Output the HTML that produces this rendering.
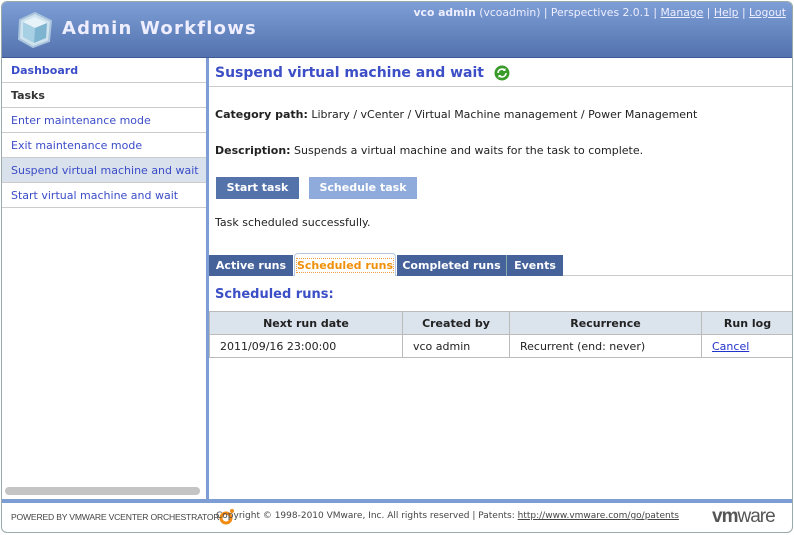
<!DOCTYPE html>
<html><head><style>
*{margin:0;padding:0;box-sizing:border-box}
body{width:794px;height:535px;background:#fff;font-family:"DejaVu Sans",Verdana,sans-serif;font-size:11px;color:#222;position:relative;overflow:hidden}
.abs{position:absolute}
#frame{left:1px;top:1px;width:792px;height:532px;border:1px solid #9aa;border-radius:6px;overflow:hidden;background:#fff}
#hdr{left:0;top:0;width:792px;height:56px;background:linear-gradient(#7d9ed6,#5372ae);border-bottom:1px solid #3e5b93}
#title{left:60px;top:16px;font-size:18px;font-weight:bold;color:#eef;letter-spacing:1.2px}
#top{right:8px;top:4px;color:#eef;font-size:10.8px}
#top u{color:#eef}
.nav{left:0;width:204px;height:25px;border-bottom:1px solid #ccc;padding:6px 0 0 9px;color:#3b4cc8;font-size:11px}
#vbar{left:204px;top:56px;width:3px;height:442px;background:#7e9dd4}
#foot{left:0;top:497px;width:792px;height:4px;background:#7e9dd4}
.tab{top:253px;height:21px;background:#45629b;color:#fff;font-weight:bold;font-size:11px;padding-top:4px;text-align:center}
table{border-collapse:collapse;position:absolute;left:207px;top:309px;width:585px}
td,th{border:1px solid #bbb;height:23px;font-size:11px}
th{background:#dbe3ed;font-weight:bold;text-align:center}
td{padding-left:10px}
.btn{top:175px;height:22px;color:#fff;font-weight:bold;text-align:center;padding-top:4px}
</style></head><body>
<div class="abs" id="frame">
<div class="abs" id="hdr">
<svg class="abs" style="left:14px;top:9px" width="38" height="38" viewBox="0 0 38 38"><polygon points="19,2 35,10 33,30 17,36 3,28 4,9" fill="#cfe3ee" stroke="#a9c4dc" stroke-width="2"/><polygon points="7,11 19,6 31,12 19,17" fill="#e8f3f9"/><polygon points="7,11 19,17 18,32 7,26" fill="#a8d0e4"/><polygon points="19,17 31,12 30,27 18,32" fill="#7fb4d0"/></svg>
<div class="abs" id="title">Admin Workflows</div>
<div class="abs" id="top"><b>vco admin</b> (vcoadmin) | Perspectives 2.0.1 | <u>Manage</u> | <u>Help</u> | <u>Logout</u></div>
</div>
<div class="abs nav" style="top:56px;font-weight:bold">Dashboard</div>
<div class="abs nav" style="top:81px;font-weight:bold;color:#333">Tasks</div>
<div class="abs nav" style="top:106px">Enter maintenance mode</div>
<div class="abs nav" style="top:131px">Exit maintenance mode</div>
<div class="abs nav" style="top:156px;background:#d8e1ec">Suspend virtual machine and wait</div>
<div class="abs nav" style="top:181px">Start virtual machine and wait</div>
<div class="abs" style="left:3px;top:485px;width:195px;height:8px;border-radius:4px;background:#c4c4c4"></div>
<div class="abs" id="vbar"></div>
<div class="abs" style="left:207px;top:84px;width:585px;height:1px;background:#ccc"></div>
<div class="abs" style="left:213px;top:63px;font-size:14px;font-weight:bold;color:#3c4fc6">Suspend virtual machine and wait</div>
<svg class="abs" style="left:492px;top:63px" width="16" height="16" viewBox="0 0 16 16"><circle cx="8" cy="8" r="7.5" fill="#3a9a2a"/><path d="M4 8a4 4 0 0 1 7-2.5M12 8a4 4 0 0 1-7 2.5" stroke="#fff" stroke-width="1.6" fill="none"/><path d="M11.5 3v3h-3zM4.5 13v-3h3z" fill="#fff"/></svg>
<div class="abs" style="left:213px;top:106px"><b>Category path:</b> Library / vCenter / Virtual Machine management / Power Management</div>
<div class="abs" style="left:213px;top:142px"><b>Description:</b> Suspends a virtual machine and waits for the task to complete.</div>
<div class="abs btn" style="left:214px;width:83px;background:#5473ab">Start task</div>
<div class="abs btn" style="left:307px;width:108px;background:#8fabdb">Schedule task</div>
<div class="abs" style="left:213px;top:214px">Task scheduled successfully.</div>
<div class="abs" style="left:207px;top:273px;width:585px;height:1px;background:#ccc"></div>
<div class="abs tab" style="left:207px;width:84px">Active runs</div>
<div class="abs tab" style="left:292px;width:102px;top:251px;height:23px;background:#fff;border:1px solid #b8c8e0;border-bottom:none;border-radius:4px 4px 0 0;color:#f0900a;padding-top:5px"><span style="outline:1px dotted #f0a040">Scheduled runs</span></div>
<div class="abs tab" style="left:395px;width:109px">Completed runs</div>
<div class="abs tab" style="left:504px;width:57px;border-left:1px solid #8aa">Events</div>
<div class="abs" style="left:213px;top:285px;font-size:13px;font-weight:bold;color:#3c4fc6">Scheduled runs:</div>
<table><tr><th style="width:193px">Next run date</th><th style="width:107px">Created by</th><th style="width:192px">Recurrence</th><th>Run log</th></tr>
<tr><td>2011/09/16 23:00:00</td><td>vco admin</td><td>Recurrent (end: never)</td><td><u style="color:#2233cc">Cancel</u></td></tr></table>
<div class="abs" id="foot"></div>
<div class="abs" style="left:9px;top:510px;font-size:8.6px;color:#444;font-family:'Liberation Sans',sans-serif;letter-spacing:-0.2px">POWERED BY VMWARE VCENTER ORCHESTRATOR</div>
<svg class="abs" style="left:216px;top:506px" width="18" height="18"><circle cx="8" cy="10" r="5" fill="none" stroke="#f08a10" stroke-width="3"/><circle cx="14" cy="3" r="2" fill="#f08a10"/></svg>
<div class="abs" style="left:214px;top:509px;font-size:9px;color:#444">Copyright © 1998-2010 VMware, Inc. All rights reserved | Patents: <u>http://www.vmware.com/go/patents</u></div>
<div class="abs" style="left:710px;top:504px;font-size:19px;font-weight:bold;color:#555;font-family:'Liberation Sans',sans-serif;letter-spacing:-1px">vm<span style="font-weight:normal">ware</span></div>
</div>
</body></html>
